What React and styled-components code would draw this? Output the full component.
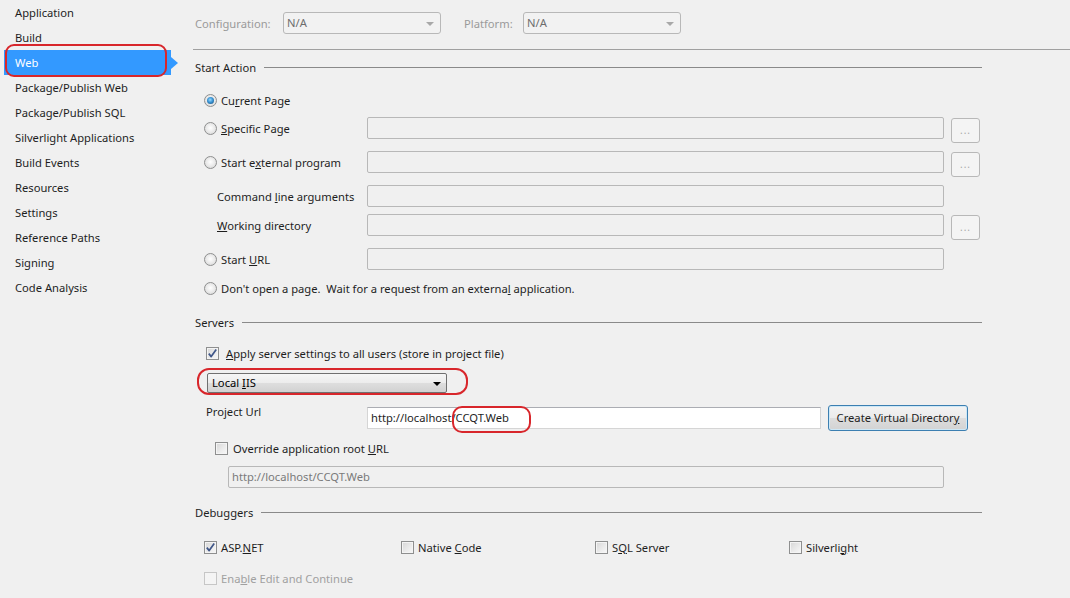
import React from 'react';
import styled, { createGlobalStyle, css } from 'styled-components';

const GlobalStyle = createGlobalStyle`
  html, body {
    margin: 0;
    padding: 0;
    background: #f0f0f0;
  }
  body {
    font-family: "Segoe UI", "Noto Sans", sans-serif;
    font-size: 11.2px;
    color: #1e1e1e;
  }
`;

const Page = styled.div`
  position: relative;
  display: flex;
  width: 1070px;
  height: 598px;
  overflow: hidden;
  background: #f0f0f0;
`;

const Sidebar = styled.ul`
  list-style: none;
  margin: 0;
  padding: 0 0 0 4px;
  width: 174px;
  flex: none;
`;

const NavItem = styled.li`
  position: relative;
  height: 25px;
  line-height: 25px;
  padding-left: 11px;
  width: 156px;
  white-space: nowrap;
  ${({ $active }) => $active && css`
    background: #3399ff;
    color: #fff;
    &::after {
      content: '';
      position: absolute;
      right: -7px;
      top: 50%;
      margin-top: -6px;
      border-left: 7px solid #3399ff;
      border-top: 6px solid transparent;
      border-bottom: 6px solid transparent;
    }
  `}
`;

const Content = styled.div`
  flex: 1;
  padding: 12px 0 0 15px;
`;

const TopBar = styled.div`
  display: flex;
  align-items: center;
  height: 22px;
  padding-left: 2px;
`;

const TopLabel = styled.span`
  width: ${({ $width }) => $width}px;
  color: #9a9a9a;
  flex: none;
`;

const Combo = styled.div`
  position: relative;
  box-sizing: border-box;
  width: 158px;
  height: 22px;
  margin-right: 23px;
  padding-left: 3px;
  border: 1px solid #b8b8b8;
  border-radius: 3px;
  background: #f2f2f2;
  color: #6d6d6d;
  line-height: 20px;
  &::after {
    content: '';
    position: absolute;
    right: 6px;
    top: 9px;
    border-top: 4px solid #a8a8a8;
    border-left: 4px solid transparent;
    border-right: 4px solid transparent;
  }
`;

const Divider = styled.div`
  height: 1px;
  margin-top: 15px;
  background: #a0a0a0;
`;

const Body = styled.div`
  padding-right: 88px;
`;

const SectionHeader = styled.div`
  display: flex;
  align-items: center;
  gap: 8px;
  height: 16px;
  margin-top: ${({ $top }) => $top}px;
  padding-left: 2px;
  &::after {
    content: '';
    flex: 1;
    height: 1px;
    background: #8a8a8a;
  }
`;

const Row = styled.div`
  display: flex;
  align-items: center;
  height: ${({ $height }) => $height || 22}px;
  margin-top: ${({ $top }) => $top}px;
  white-space: nowrap;
`;

const LabelCell = styled.div`
  display: flex;
  align-items: center;
  gap: ${({ $gap }) => ($gap === undefined ? 4 : $gap)}px;
  width: ${({ $width }) => ($width ? `${$width}px` : 'auto')};
  box-sizing: border-box;
  padding-left: ${({ $indent }) => $indent}px;
  flex: none;
  ${({ $top }) => $top !== undefined && css`
    align-self: flex-start;
    margin-top: ${$top}px;
  `}
`;

const Key = styled.u`
  text-decoration: underline;
  text-underline-offset: 1px;
`;

const Radio = styled.span`
  box-sizing: border-box;
  width: 13px;
  height: 13px;
  flex: none;
  border-radius: 50%;
  border: 1px solid #8e8f8f;
  background: radial-gradient(circle at 50% 45%, #ffffff 0%, #e8e8e8 55%, #cfcfcf 100%);
  display: flex;
  align-items: center;
  justify-content: center;
  ${({ $checked }) => $checked && css`
    &::after {
      content: '';
      width: 7px;
      height: 7px;
      border-radius: 50%;
      background: radial-gradient(circle at 45% 40%, #9adcff 0%, #3a93d4 45%, #11466f 100%);
    }
  `}
`;

const CheckBox = styled.span`
  box-sizing: border-box;
  width: 13px;
  height: 13px;
  flex: none;
  border: 1px solid ${({ $disabled }) => ($disabled ? '#c6c6c6' : '#8e8f8f')};
  background: ${({ $disabled }) => ($disabled
    ? '#f4f4f4'
    : 'linear-gradient(135deg, #d6d6d6 0%, #ececec 60%, #f8f8f8 100%)')};
  box-shadow: inset 0 0 0 1px #f4f4f4;
  display: flex;
  align-items: center;
  justify-content: center;
  svg {
    display: block;
  }
`;

const Muted = styled.span`
  color: #a0a0a0;
`;

const TextBox = styled.div`
  box-sizing: border-box;
  width: ${({ $width }) => $width}px;
  height: 22px;
  margin-left: ${({ $left }) => $left || 0}px;
  padding-left: 3px;
  flex: none;
  line-height: 20px;
  border: 1px solid ${({ $enabled }) => ($enabled ? '#d5d5d5' : '#b8b8b8')};
  border-top-color: ${({ $enabled }) => ($enabled ? '#abadb3' : '#b8b8b8')};
  border-radius: ${({ $enabled }) => ($enabled ? 0 : 2)}px;
  background: ${({ $enabled }) => ($enabled ? '#ffffff' : '#f0f0f0')};
  color: ${({ $enabled }) => ($enabled ? '#1e1e1e' : '#7a7a7a')};
`;

const BrowseButton = styled.div`
  box-sizing: border-box;
  width: 29px;
  height: 25px;
  margin-left: 7px;
  align-self: flex-start;
  margin-top: 1px;
  flex: none;
  border: 1px solid #b8b8b8;
  border-radius: 3px;
  background: #f4f4f4;
  color: #a8a8a8;
  text-align: center;
  line-height: 23px;
  font-size: 10px;
  letter-spacing: 1px;
`;

const ServerSelect = styled.div`
  position: relative;
  box-sizing: border-box;
  width: 240px;
  height: 20px;
  margin-left: 14px;
  padding-left: 4px;
  border: 1px solid #707070;
  border-radius: 2px;
  background: linear-gradient(#f6f6f6 0%, #ececec 50%, #dedede 50%, #d2d2d2 100%);
  color: #000;
  line-height: 18px;
  &::after {
    content: '';
    position: absolute;
    right: 5px;
    top: 8px;
    border-top: 4px solid #000;
    border-left: 4px solid transparent;
    border-right: 4px solid transparent;
  }
`;

const ActionButton = styled.div`
  box-sizing: border-box;
  width: 140px;
  height: 26px;
  margin-left: 7px;
  flex: none;
  border: 1px solid #3c7fb1;
  border-radius: 3px;
  background: linear-gradient(#f3f3f3 0%, #ebebeb 50%, #dddddd 50%, #d3d3d3 100%);
  box-shadow: inset 0 0 0 1px #cde8f7;
  color: #1e1e1e;
  text-align: center;
  line-height: 24px;
`;

const DebuggerCell = styled.div`
  display: flex;
  align-items: center;
  gap: 4px;
  width: ${({ $width }) => $width}px;
  flex: none;
`;

const Annotation = styled.div`
  position: absolute;
  left: ${({ $x }) => $x}px;
  top: ${({ $y }) => $y}px;
  width: ${({ $w }) => $w}px;
  height: ${({ $h }) => $h}px;
  box-sizing: border-box;
  border: 2px solid #d8262b;
  border-radius: ${({ $r }) => $r}px;
  pointer-events: none;
`;

const Check = ({ checked, disabled }) => (
  <CheckBox $disabled={disabled}>
    {checked && (
      <svg width="11" height="11" viewBox="0 0 11 11">
        <path d="M1.8 5.6 L4.2 8.6 L9.2 1.6" fill="none" stroke="#3f5688" strokeWidth="1.7" strokeLinejoin="round" />
      </svg>
    )}
  </CheckBox>
);

const navItems = [
  'Application', 'Build', 'Web', 'Package/Publish Web', 'Package/Publish SQL',
  'Silverlight Applications', 'Build Events', 'Resources', 'Settings',
  'Reference Paths', 'Signing', 'Code Analysis',
];

const App = () => (
  <Page>
    <GlobalStyle />
    <Sidebar>
      {navItems.map((item) => (
        <NavItem key={item} $active={item === 'Web'}>{item}</NavItem>
      ))}
    </Sidebar>

    <Content>
      <TopBar>
        <TopLabel $width={88}>Configuration:</TopLabel>
        <Combo>N/A</Combo>
        <TopLabel $width={59}>Platform:</TopLabel>
        <Combo>N/A</Combo>
      </TopBar>
      <Divider />

      <Body>
        <SectionHeader $top={9}>Start Action</SectionHeader>

        <Row $top={14}>
          <LabelCell $indent={11}><Radio $checked /><span>Cu<Key>r</Key>rent Page</span></LabelCell>
        </Row>
        <Row $top={6}>
          <LabelCell $indent={11} $width={174}><Radio /><span><Key>S</Key>pecific Page</span></LabelCell>
          <TextBox $width={577} />
          <BrowseButton>...</BrowseButton>
        </Row>
        <Row $top={12}>
          <LabelCell $indent={11} $width={174}><Radio /><span>Start e<Key>x</Key>ternal program</span></LabelCell>
          <TextBox $width={577} />
          <BrowseButton>...</BrowseButton>
        </Row>
        <Row $top={12}>
          <LabelCell $indent={24} $width={174}><span>Command <Key>l</Key>ine arguments</span></LabelCell>
          <TextBox $width={577} />
        </Row>
        <Row $top={7}>
          <LabelCell $indent={24} $width={174}><span><Key>W</Key>orking directory</span></LabelCell>
          <TextBox $width={577} />
          <BrowseButton>...</BrowseButton>
        </Row>
        <Row $top={12}>
          <LabelCell $indent={11} $width={174}><Radio /><span>Start <Key>U</Key>RL</span></LabelCell>
          <TextBox $width={577} />
        </Row>
        <Row $top={7}>
          <LabelCell $indent={11}><Radio /><span>Don't open a page.&nbsp; Wait for a request from an externa<Key>l</Key> application.</span></LabelCell>
        </Row>

        <SectionHeader $top={15}>Servers</SectionHeader>

        <Row $top={14} $height={18}>
          <LabelCell $indent={13} $gap={7}><Check checked /><span><Key>A</Key>pply server settings to all users (store in project file)</span></LabelCell>
        </Row>
        <Row $top={11} $height={20}>
          <ServerSelect>Local <Key>I</Key>IS</ServerSelect>
        </Row>
        <Row $top={12} $height={26}>
          <LabelCell $indent={13} $width={174} $top={-1}><span>Pro<Key>j</Key>ect Url</span></LabelCell>
          <TextBox $width={454} $enabled>http://localhost/CCQT.Web</TextBox>
          <ActionButton>Create Virtual Director<Key>y</Key></ActionButton>
        </Row>
        <Row $top={8} $height={18}>
          <LabelCell $indent={22} $gap={5}><Check /><span>Override application root <Key>U</Key>RL</span></LabelCell>
        </Row>
        <Row $top={9}>
          <TextBox $width={716} $left={35}>http://localhost/CCQT.Web</TextBox>
        </Row>

        <SectionHeader $top={16}>Debuggers</SectionHeader>

        <Row $top={18} $height={18}>
          <LabelCell $indent={11} $gap={0}>
            <DebuggerCell $width={197}><Check checked /><span>ASP.<Key>N</Key>ET</span></DebuggerCell>
            <DebuggerCell $width={194}><Check /><span>Native <Key>C</Key>ode</span></DebuggerCell>
            <DebuggerCell $width={194}><Check /><span>S<Key>Q</Key>L Server</span></DebuggerCell>
            <DebuggerCell $width={120}><Check /><span>Silverli<Key>g</Key>ht</span></DebuggerCell>
          </LabelCell>
        </Row>
        <Row $top={13} $height={18}>
          <LabelCell $indent={11}><Check disabled /><Muted>Ena<Key>b</Key>le Edit and Continue</Muted></LabelCell>
        </Row>
      </Body>
    </Content>

    <Annotation $x={5} $y={44} $w={162} $h={33} $r={9} />
    <Annotation $x={197} $y={368} $w={271} $h={27} $r={12} />
    <Annotation $x={452} $y={406} $w={79} $h={27} $r={10} />
  </Page>
);

export default App;
